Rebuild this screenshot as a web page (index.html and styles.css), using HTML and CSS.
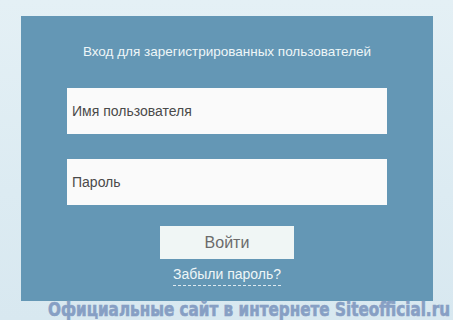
FILE: index.html
```html
<!DOCTYPE html>
<html lang="ru">
<head>
<meta charset="utf-8">
<title>Вход</title>
<link rel="stylesheet" href="styles.css">
</head>
<body>
<div class="page">
  <form class="panel">
    <div class="title">Вход для зарегистрированных пользователей</div>
    <div class="field field-user">Имя пользователя</div>
    <div class="field field-pass">Пароль</div>
    <div class="btn">Войти</div>
    <a class="forgot">Забыли пароль?</a>
  </form>
  <div class="watermark">Официальные сайт в интернете Siteofficial.ru</div>
</div>
</body>
</html>
```

FILE: styles.css
```css
html, body {
  margin: 0;
  padding: 0;
}
body {
  width: 453px;
  height: 320px;
  overflow: hidden;
  background: linear-gradient(180deg, #e4f0f5 0%, #dcebf2 60%, #d8e8f0 100%);
  font-family: "Liberation Sans", Arial, sans-serif;
}
.page {
  padding: 16px 20px 0 21px;
}
.panel {
  box-sizing: border-box;
  width: 412px;
  height: 285px;
  margin: 0;
  background: #6497b5;
  display: flex;
  flex-direction: column;
  align-items: center;
  padding-top: 28px;
}
.title {
  color: #eef6f8;
  font-size: 13.5px;
  line-height: 16px;
  height: 16px;
}
.field {
  box-sizing: border-box;
  width: 320px;
  height: 46px;
  background: #fafafa;
  color: #4a4a4a;
  font-size: 14px;
  padding-left: 5px;
  display: flex;
  align-items: center;
}
.field-user {
  margin-top: 28px;
}
.field-pass {
  margin-top: 25px;
}
.btn {
  box-sizing: border-box;
  margin-top: 21px;
  width: 134px;
  height: 33px;
  background: #f0f6f5;
  color: #6b6b6b;
  font-size: 16px;
  display: flex;
  align-items: center;
  justify-content: center;
}
.forgot {
  margin-top: 6px;
  color: #eef6f8;
  font-size: 14px;
  line-height: 18px;
  padding-bottom: 2px;
  border-bottom: 1px dashed #dfeaf0;
}
.watermark {
  margin: 0 0 0 27px;
  color: #879fc4;
  font-family: "DejaVu Sans Condensed", "Liberation Sans Narrow", sans-serif;
  font-weight: bold;
  font-size: 19px;
  line-height: 17px;
  white-space: nowrap;
  transform: scaleX(0.89);
  transform-origin: left center;
  -webkit-text-stroke: 0.6px #879fc4;
}
```
